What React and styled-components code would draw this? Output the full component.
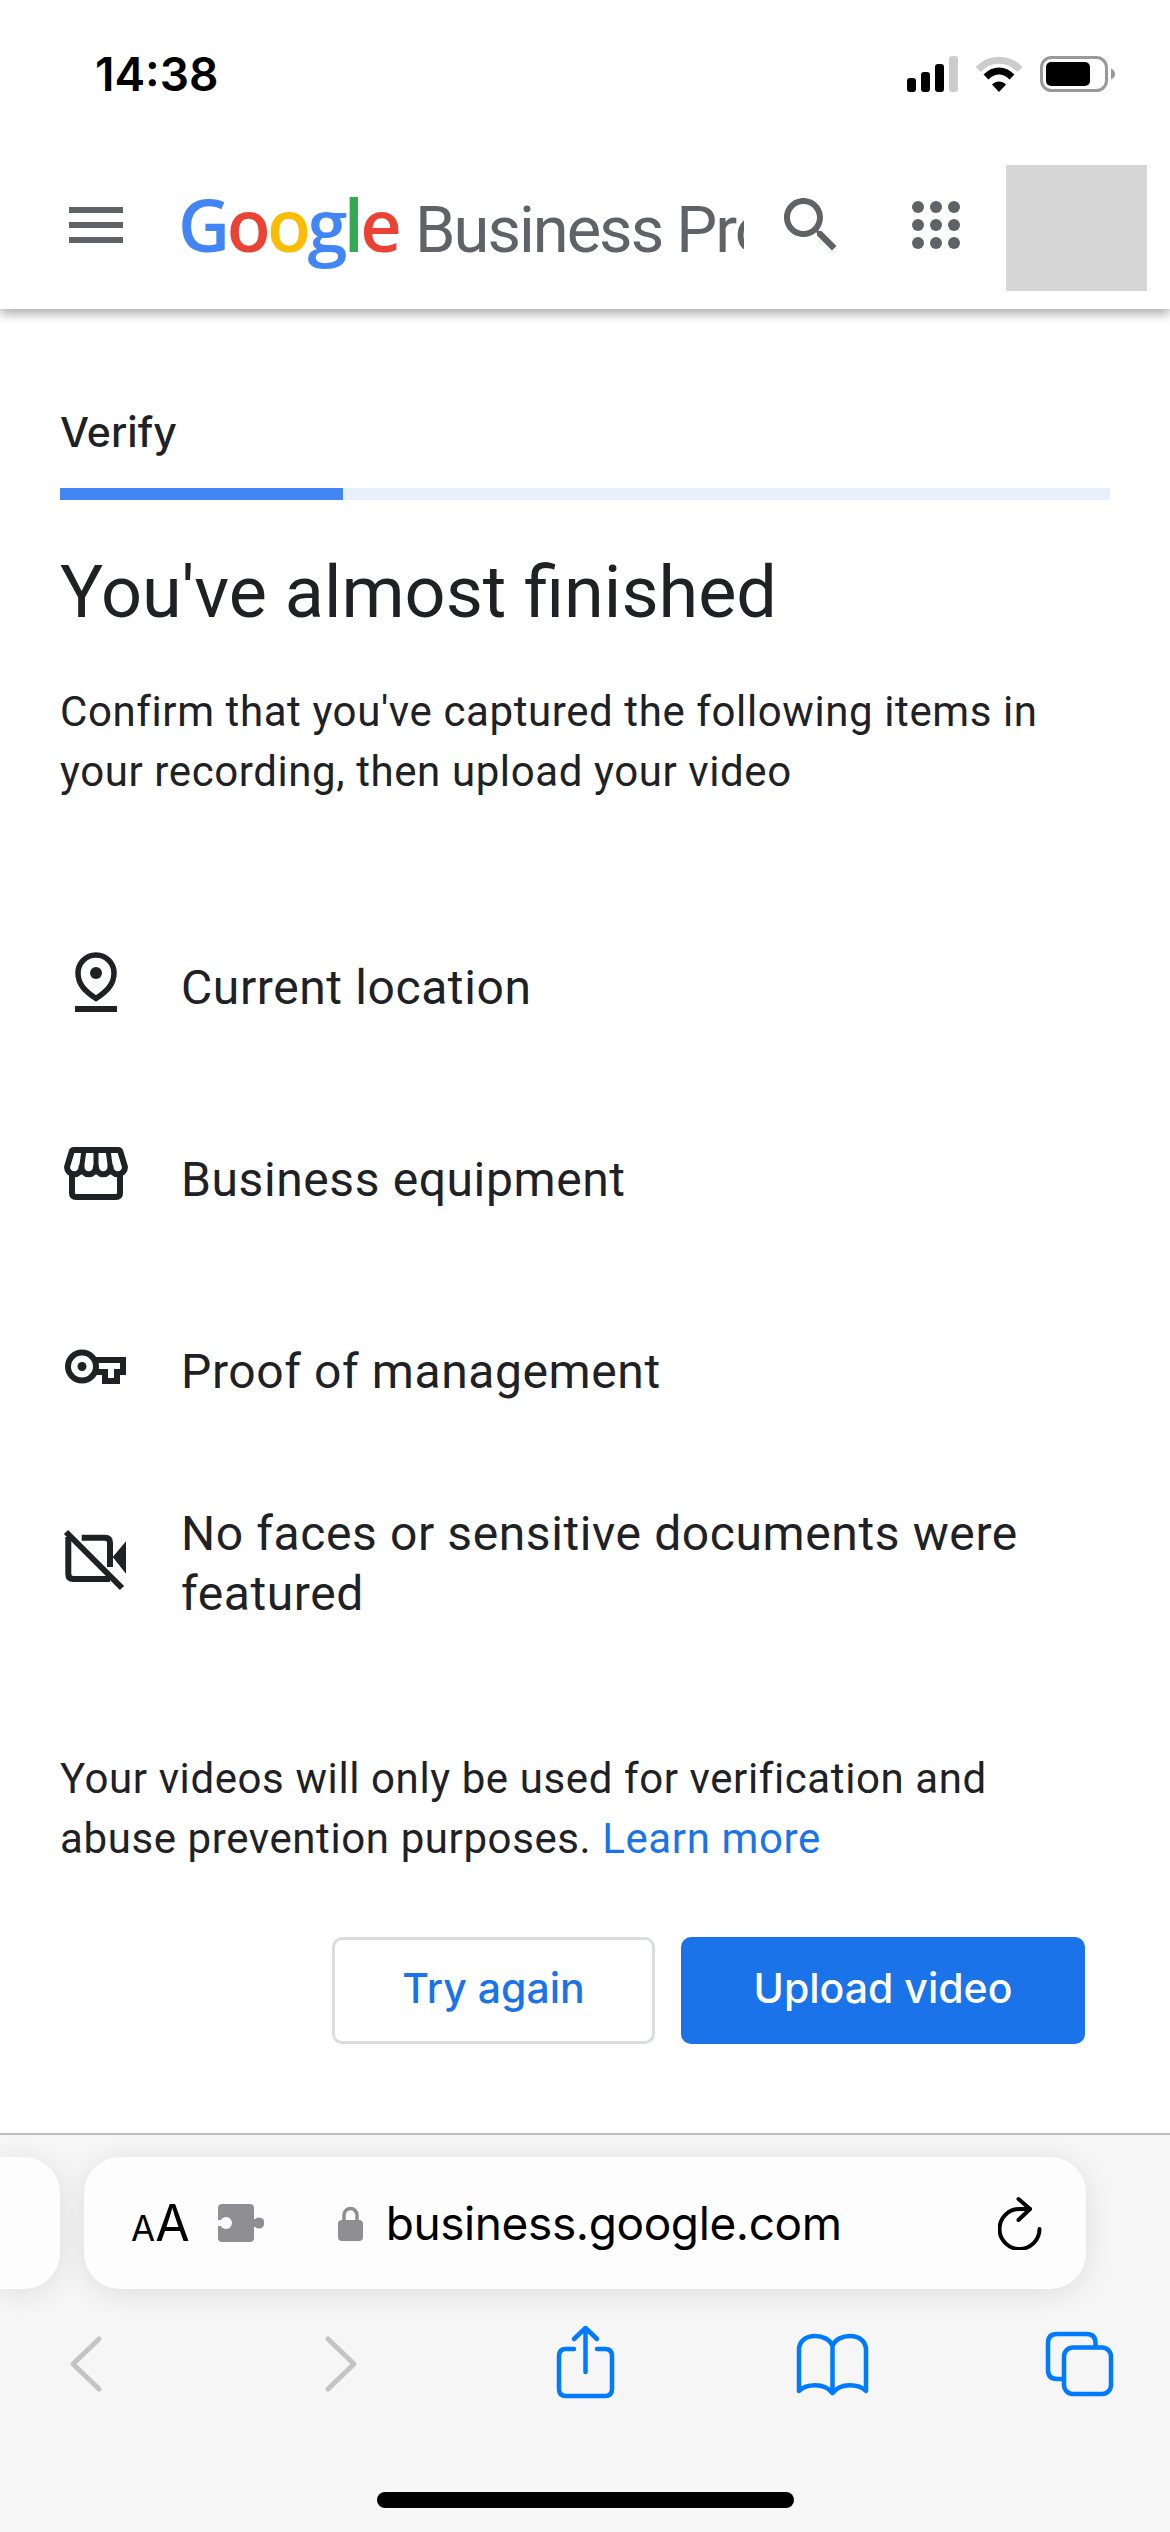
import React from "react";
import styled, { createGlobalStyle } from "styled-components";

const GlobalStyle = createGlobalStyle`
  html, body { margin: 0; padding: 0; background: #fff; }
  * { box-sizing: border-box; }
`;

const Page = styled.div`
  width: 1170px;
  height: 2532px;
  display: flex;
  flex-direction: column;
  overflow: hidden;
  background: #fff;
  font-family: Roboto, "Liberation Sans", sans-serif;
  color: #202124;
`;

const StatusBar = styled.div`
  height: 150px;
  flex: none;
  display: flex;
  align-items: center;
  justify-content: space-between;
  padding: 0 55px 3px 95px;
  background: #fff;
  position: relative;
  z-index: 2;
`;

const Clock = styled.span`
  font-family: Inter, "Liberation Sans", sans-serif;
  font-size: 46px;
  font-weight: 600;
  color: #000;
`;

const StatusIcons = styled.div`
  display: flex;
  align-items: center;
  gap: 17px;
`;

const Header = styled.header`
  flex: none;
  height: 159px;
  display: flex;
  align-items: center;
  padding: 15px 23px 18px 60px;
  background: #fff;
  box-shadow: 0 5px 10px rgba(0, 0, 0, 0.32);
  position: relative;
  z-index: 1;
`;

const HeaderIcon = styled.svg`
  flex: none;
  width: 72px;
  height: 72px;
  margin-bottom: 6px;
  margin-left: ${(p) => p.$left || 0}px;
  fill: #5f6368;
`;

const Brand = styled.div`
  flex: none;
  width: 566px;
  margin-left: 46px;
  margin-bottom: 9px;
  overflow: hidden;
  white-space: nowrap;
  display: flex;
  align-items: baseline;
  gap: 17px;
`;

const GoogleWord = styled.span`
  font-family: "Open Sans", sans-serif;
  font-size: 72px;
  font-weight: 600;
  letter-spacing: -3.6px;
`;

const Letter = styled.span`
  color: ${(p) => p.$color};
`;

const ProductName = styled.span`
  font-family: Roboto, sans-serif;
  font-size: 65px;
  letter-spacing: -2px;
  color: #5f6368;
`;

const Avatar = styled.div`
  flex: none;
  width: 141px;
  height: 126px;
  margin-left: 34px;
  background: #d6d6d6;
`;

const Main = styled.main`
  flex: 1;
  padding: 93px 60px 0;
`;

const StepLabel = styled.div`
  font-family: Inter, Roboto, sans-serif;
  font-size: 41px;
  font-weight: 500;
  line-height: 60px;
`;

const Progress = styled.div`
  height: 12px;
  margin-top: 26px;
  background: #e8f0fe;
`;

const ProgressFill = styled.div`
  height: 100%;
  background: #4285f4;
`;

const Title = styled.h1`
  margin: 47px 0 0;
  font-size: 72px;
  font-weight: 400;
  line-height: 92px;
`;

const Lead = styled.p`
  margin: 43px 0 0;
  font-size: 42px;
  line-height: 60px;
  letter-spacing: 0.6px;
`;

const Checklist = styled.ul`
  list-style: none;
  margin: 126px 0 0;
  padding: 0;
  display: flex;
  flex-direction: column;
  gap: 72px;
`;

const Item = styled.li`
  min-height: 120px;
  display: flex;
  align-items: center;
  gap: 49px;
  font-size: 48px;
  line-height: 60px;
  letter-spacing: 0.6px;
`;

const ItemIcon = styled.svg`
  flex: none;
  width: 72px;
  height: 72px;
  fill: none;
  stroke: #202124;
  stroke-width: 6;
`;

const Note = styled.p`
  margin: 125px 0 0;
  font-size: 42px;
  line-height: 60px;
  letter-spacing: 0.6px;
`;

const NoteLink = styled.a`
  color: #1a73e8;
`;

const Actions = styled.div`
  display: flex;
  justify-content: flex-end;
  gap: 26px;
  margin: 68px 25px 0 0;
`;

const Button = styled.button`
  width: ${(p) => p.$width}px;
  height: 107px;
  padding: 0 0 6px;
  border-radius: 10px;
  border: 3px solid ${(p) => (p.$primary ? "#1a73e8" : "#dadce0")};
  background: ${(p) => (p.$primary ? "#1a73e8" : "#fff")};
  color: ${(p) => (p.$primary ? "#fff" : "#1a73e8")};
  font-family: Inter, Roboto, sans-serif;
  font-size: 41px;
  font-weight: 500;
`;

const BrowserChrome = styled.footer`
  flex: none;
  height: 399px;
  border-top: 2px solid #bcbcbc;
  background: #f6f6f6;
  overflow: hidden;
`;

const TabStrip = styled.div`
  display: flex;
  gap: 24px;
  margin-top: 22px;
`;

const PrevTab = styled.div`
  width: 60px;
  height: 132px;
  border-radius: 0 36px 36px 0;
  background: #fdfdfd;
  box-shadow: 0 4px 30px rgba(0, 0, 0, 0.1);
`;

const AddressBar = styled.div`
  width: 1002px;
  height: 132px;
  display: flex;
  align-items: center;
  padding: 0 44px 0 47px;
  border-radius: 36px;
  background: #fdfdfd;
  box-shadow: 0 4px 30px rgba(0, 0, 0, 0.1);
`;

const TextSize = styled.span`
  display: flex;
  align-items: baseline;
  font-family: Inter, sans-serif;
  font-size: ${(p) => p.$size}px;
  line-height: 1;
  color: #000;
`;

const Small = styled.span`
  font-size: 35px;
`;

const Puzzle = styled.svg`
  width: 46px;
  height: 38px;
  margin-left: 28px;
  fill: #8e8e93;
`;

const Lock = styled.svg`
  width: 25px;
  height: 36px;
  margin-left: 74px;
  fill: #8e8e93;
`;

const Url = styled.span`
  flex: 1;
  margin-left: 23px;
  font-family: Inter, sans-serif;
  font-size: 46px;
  letter-spacing: -0.4px;
  color: #000;
`;

const Reload = styled.svg`
  width: 44px;
  height: 54px;
  fill: none;
  stroke: #000;
  stroke-width: 4;
  stroke-linecap: round;
  stroke-linejoin: round;
`;

const NavBar = styled.nav`
  display: flex;
  gap: 176px;
  margin-top: 37px;
  padding-left: 50px;
`;

const NavIcon = styled.svg`
  flex: none;
  width: 72px;
  height: 72px;
  overflow: visible;
  fill: none;
  stroke: ${(p) => (p.$off ? "#c4c4c4" : "#007aff")};
  stroke-width: ${(p) => (p.$off ? 5 : 4.5)};
  stroke-linecap: round;
  stroke-linejoin: round;
`;

const HomeBar = styled.div`
  width: 417px;
  height: 16px;
  margin: 94px auto 0;
  border-radius: 8px;
  background: #000;
`;

const items = [
  {
    label: "Current location",
    icon: (
      <>
        <path d="M36 46.5C26 40 18 33 18 21a18 18 0 0 1 36 0C54 33 46 40 36 46.5Z" strokeWidth="5.500" />
        <circle cx="36" cy="21" r="6" fill="#202124" stroke="none" />
        <path d="M15 57H57" />
      </>
    ),
  },
  {
    label: "Business equipment",
    icon: (
      <>
        <path d="M14 6H58Q60 6 60.500 8L65 23a7.200 7.200 0 0 1-14.500 0 7.200 7.200 0 0 1-14.500 0 7.200 7.200 0 0 1-14.500 0 7.200 7.200 0 0 1-14.500 0L11.500 8Q12 6 14 6Z" strokeLinejoin="round" />
        <path d="M24 6L21.500 24M36 6V24M48 6L50.500 24" strokeWidth="5" />
        <path d="M12 31V49q0 4 4 4H56q4 0 4-4V31" />
      </>
    ),
  },
  {
    label: "Proof of management",
    icon: (
      <>
        <circle cx="22" cy="30.500" r="14" strokeWidth="6" />
        <circle cx="22" cy="30.500" r="4.500" fill="#202124" stroke="none" />
        <path d="M34 24H63V36H57V45H45V36H34" strokeWidth="6" />
      </>
    ),
  },
  {
    label: "No faces or sensitive documents were featured",
    icon: (
      <>
        <path d="M8.300 9V46q0 5 5 5H50" />
        <path d="M21.700 9.700H45q5 0 5 5V39" />
        <path d="M6 4L62 60" />
        <path d="M66 13.300V45.700L52.700 29Z" fill="#202124" stroke="none" />
      </>
    ),
  },
];

const App = () => {
  return (
    <Page>
      <GlobalStyle />
      <StatusBar>
        <Clock>14:38</Clock>
        <StatusIcons>
          <svg width="51" height="36" viewBox="0 0 51 36">
            <rect x="0" y="22" width="9" height="14" rx="3" fill="#000" />
            <rect x="14" y="16" width="9" height="20" rx="3" fill="#000" />
            <rect x="28" y="8" width="9" height="28" rx="3" fill="#000" />
            <rect x="42" y="0" width="9" height="36" rx="3" fill="#ccc" />
          </svg>
          <svg width="48" height="36" viewBox="0 0 48 36" fill="none">
            <path d="M3 13.500C15 1 33 1 45 13.500" stroke="#ccc" strokeWidth="7" />
            <path d="M11 21C19 13 29 13 37 21" stroke="#000" strokeWidth="7" />
            <path d="M17 28.500C21 24.500 27 24.500 31 28.500L24 36Z" fill="#000" />
          </svg>
          <svg width="75" height="36" viewBox="0 0 75 36">
            <rect x="1.500" y="1.500" width="65" height="33" rx="10" fill="none" stroke="#999" strokeWidth="3" />
            <rect x="6" y="6" width="44" height="24" rx="5" fill="#000" />
            <path d="M71 12.500q4 2 4 5.500t-4 5.500Z" fill="#999" />
          </svg>
        </StatusIcons>
      </StatusBar>

      <Header>
        <HeaderIcon viewBox="0 0 24 24">
          <path d="M3 18h18v-2H3v2zm0-5h18v-2H3v2zm0-7v2h18V6H3z" />
        </HeaderIcon>
        <Brand>
          <GoogleWord>
            <Letter $color="#4285f4">G</Letter>
            <Letter $color="#ea4335">o</Letter>
            <Letter $color="#fbbc05">o</Letter>
            <Letter $color="#4285f4">g</Letter>
            <Letter $color="#34a853">l</Letter>
            <Letter $color="#ea4335">e</Letter>
          </GoogleWord>
          <ProductName>Business Profile</ProductName>
        </Brand>
        <HeaderIcon viewBox="0 0 24 24" $left={31}>
          <path d="M15.500 14h-.79l-.28-.27C15.410 12.590 16 11.110 16 9.500 16 5.910 13.090 3 9.500 3S3 5.910 3 9.500 5.910 16 9.500 16c1.610 0 3.090-.59 4.230-1.570l.27.28v.79l5 4.990L20.490 19l-4.990-5zm-6 0C7.010 14 5 11.990 5 9.500S7.010 5 9.500 5 14 7.010 14 9.500 11.990 14 9.500 14z" />
        </HeaderIcon>
        <HeaderIcon viewBox="0 0 24 24" $left={53}>
          {[6, 12, 18].map((y) =>
            [6, 12, 18].map((x) => <circle key={`${x}-${y}`} cx={x} cy={y} r="2" />)
          )}
        </HeaderIcon>
        <Avatar />
      </Header>

      <Main>
        <StepLabel>Verify</StepLabel>
        <Progress>
          <ProgressFill style={{ width: `${(283 / 1050) * 100}%` }} />
        </Progress>
        <Title>You've almost finished</Title>
        <Lead>
          Confirm that you've captured the following items in
          <br />
          your recording, then upload your video
        </Lead>
        <Checklist>
          {items.map((item) => (
            <Item key={item.label}>
              <ItemIcon viewBox="0 0 72 72">{item.icon}</ItemIcon>
              <span>{item.label}</span>
            </Item>
          ))}
        </Checklist>
        <Note>
          Your videos will only be used for verification and
          <br />
          abuse prevention purposes. <NoteLink>Learn more</NoteLink>
        </Note>
        <Actions>
          <Button $width={323}>Try again</Button>
          <Button $width={404} $primary>
            Upload video
          </Button>
        </Actions>
      </Main>

      <BrowserChrome>
        <TabStrip>
          <PrevTab />
          <AddressBar>
            <TextSize $size={50}>
              <Small>A</Small>A
            </TextSize>
            <Puzzle viewBox="0 0 46 38">
              <circle cx="41" cy="19" r="5.500" />
              <rect x="34" y="15" width="6" height="8" />
              <path d="M4 0H32q4 0 4 4V34q0 4-4 4H4q-4 0-4-4V4q0-4 4-4Z" />
              <circle cx="8" cy="19" r="6" fill="#fdfdfd" />
              <rect x="0" y="16" width="6" height="6" fill="#fdfdfd" />
            </Puzzle>
            <Lock viewBox="0 0 25 36">
              <path d="M6 16V10a6.500 6.500 0 0 1 13 0V16" fill="none" stroke="#8e8e93" strokeWidth="3.500" />
              <rect x="0" y="15" width="25" height="21" rx="4" />
            </Lock>
            <Url>business.google.com</Url>
            <Reload viewBox="0 0 44 54">
              <path d="M41.500 33a20 20 0 1 1-20-20H32" />
              <path d="M20.500 3L32 13 20.500 24" />
            </Reload>
          </AddressBar>
        </TabStrip>
        <NavBar>
          <NavIcon $off viewBox="0 0 72 72">
            <path d="M49 13L23 38L49 63" />
          </NavIcon>
          <NavIcon $off viewBox="0 0 72 72">
            <path d="M30 13L56 38L30 63" />
          </NavIcon>
          <NavIcon viewBox="0 0 72 72">
            <path d="M28 23H20q-7 0-7 7V63q0 7 7 7H59q7 0 7-7V30q0-7-7-7H51" />
            <path d="M39.500 46V2M28 13L39.500 2L51 13" />
          </NavIcon>
          <NavIcon viewBox="0 0 72 72">
            <path d="M38.500 20C36 13 28 10 21 10C11 10 5 16 5 24V65C12 58 30 56 38.500 67C47 56 65 58 72 65V24C72 16 66 10 56 10C49 10 41 13 38.500 20ZM38.500 20V67" />
          </NavIcon>
          <NavIcon viewBox="0 0 72 72">
            <path d="M53.500 21V17q0-9-9-9H15q-9 0-9 9V44q0 9 9 9H22" />
            <rect x="22" y="21.500" width="47" height="46.500" rx="9" />
          </NavIcon>
        </NavBar>
        <HomeBar />
      </BrowserChrome>
    </Page>
  );
};

export default App;
